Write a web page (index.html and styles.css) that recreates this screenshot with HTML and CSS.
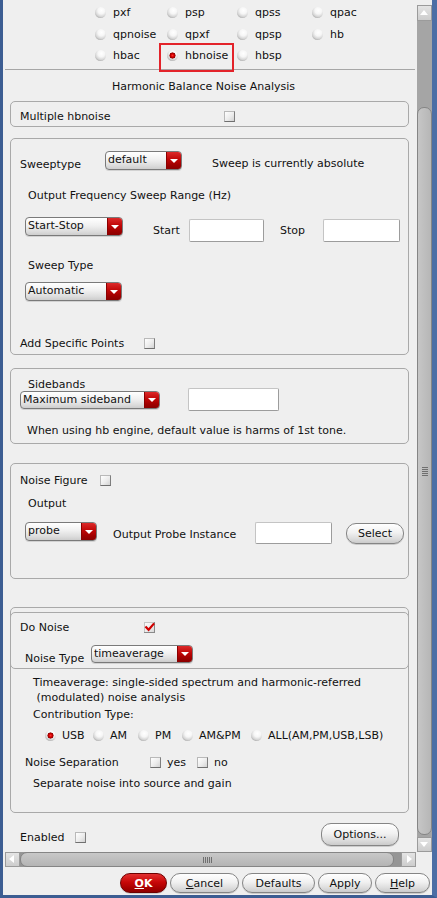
FILE: index.html
```html
<!DOCTYPE html>
<html>
<head>
<meta charset="utf-8">
<title>Harmonic Balance Noise Analysis</title>
<link rel="stylesheet" href="styles.css">
</head>
<body>
<div class="window">
  <div class="main">
    <div class="content">
      <div class="radio-grid">
        <span class="opt"><span class="radio"></span>pxf</span>
        <span class="opt"><span class="radio"></span>psp</span>
        <span class="opt"><span class="radio"></span>qpss</span>
        <span class="opt"><span class="radio"></span>qpac</span>
        <span class="opt"><span class="radio"></span>qpnoise</span>
        <span class="opt"><span class="radio"></span>qpxf</span>
        <span class="opt"><span class="radio"></span>qpsp</span>
        <span class="opt"><span class="radio"></span>hb</span>
        <span class="opt"><span class="radio"></span>hbac</span>
        <span class="opt highlighted"><span class="radio on"></span>hbnoise</span>
        <span class="opt"><span class="radio"></span>hbsp</span>
      </div>
      <div class="sep"></div>
      <div class="title">Harmonic Balance Noise Analysis</div>

      <div class="group g1">
        <span class="lbl w204">Multiple hbnoise</span><span class="check"></span>
      </div>

      <div class="group g2">
        <div class="row g2-r1">
          <span class="lbl w85 mt7">Sweeptype</span>
          <span class="combo w77"><span class="combo-text">default</span><span class="combo-arrow"></span></span>
          <span class="lbl ml30 mt6">Sweep is currently absolute</span>
        </div>
        <div class="row g2-r2"><span class="lbl">Output Frequency Sweep Range (Hz)</span></div>
        <div class="row g2-r3">
          <span class="combo w98"><span class="combo-text">Start-Stop</span><span class="combo-arrow"></span></span>
          <span class="lbl ml30 w36 mt7">Start</span>
          <span class="field w75 mt2"></span>
          <span class="lbl ml16 w43 mt7">Stop</span>
          <span class="field w77 mt2"></span>
        </div>
        <div class="row g2-r4"><span class="lbl">Sweep Type</span></div>
        <div class="row g2-r5">
          <span class="combo w97"><span class="combo-text">Automatic</span><span class="combo-arrow"></span></span>
        </div>
        <div class="row g2-r6 center">
          <span class="lbl w124">Add Specific Points</span><span class="check"></span>
        </div>
      </div>

      <div class="group g3">
        <div class="row g3-r1"><span class="lbl">Sidebands</span></div>
        <div class="row g3-r2">
          <span class="combo w140 h18 mt3"><span class="combo-text">Maximum sideband</span><span class="combo-arrow"></span></span>
          <span class="field w91 ml28"></span>
        </div>
        <div class="row g3-r3"><span class="lbl">When using hb engine, default value is harms of 1st tone.</span></div>
      </div>

      <div class="group g4">
        <div class="row g4-r1 center">
          <span class="lbl w80">Noise Figure</span><span class="check"></span>
        </div>
        <div class="row g4-r2"><span class="lbl">Output</span></div>
        <div class="row g4-r3">
          <span class="combo w72"><span class="combo-text">probe</span><span class="combo-arrow"></span></span>
          <span class="lbl ml16 w142 mt6">Output Probe Instance</span>
          <span class="field w77 h22"></span>
          <span class="btn select">Select</span>
        </div>
      </div>

      <div class="group g5">
        <div class="g5-top">
          <div class="row g5-r1 center">
            <span class="lbl w124">Do Noise</span>
            <span class="check checked"><svg width="11" height="11" viewBox="0 0 11 11"><path d="M2.2 5.2 L4.6 7.8 L9.4 2.2" fill="none" stroke="#d00000" stroke-width="2.2" stroke-linecap="square"/></svg></span>
          </div>
          <div class="row g5-r2">
            <span class="lbl w66 mt7">Noise Type</span>
            <span class="combo w102 h18"><span class="combo-text">timeaverage</span><span class="combo-arrow"></span></span>
          </div>
        </div>
        <div class="txt t1">Timeaverage: single-sided spectrum and harmonic-referred</div>
        <div class="txt t2">&nbsp;(modulated) noise analysis</div>
        <div class="txt t3">Contribution Type:</div>
        <div class="contrib">
          <span class="opt"><span class="radio on"></span>USB</span>
          <span class="opt"><span class="radio"></span>AM</span>
          <span class="opt"><span class="radio"></span>PM</span>
          <span class="opt"><span class="radio"></span>AM&amp;PM</span>
          <span class="opt"><span class="radio"></span>ALL(AM,PM,USB,LSB)</span>
        </div>
        <div class="row noise-sep center">
          <span class="lbl w125">Noise Separation</span>
          <span class="cbopt w47"><span class="check"></span>yes</span>
          <span class="cbopt"><span class="check"></span>no</span>
        </div>
        <div class="txt t4">Separate noise into source and gain</div>
      </div>

      <div class="enabled-row">
        <span class="lbl w55 mt8">Enabled</span>
        <span class="check mt9"></span>
        <span class="btn options">Options...</span>
      </div>
    </div>

    <div class="vscroll">
      <div class="sb-btn up"></div>
      <div class="sb-track-v"><div class="sb-thumb-v"><span class="grip-v"></span></div></div>
      <div class="sb-btn down"></div>
    </div>
  </div>

  <div class="hscroll">
    <div class="sb-btn left"></div>
    <div class="sb-track-h"><div class="sb-thumb-h"><span class="grip-h"></span></div></div>
    <div class="sb-btn right"></div>
  </div>

  <div class="buttons">
    <span class="btn ok"><u>O</u>K</span>
    <span class="btn cancel"><u>C</u>ancel</span>
    <span class="btn defaults">Defaults</span>
    <span class="btn apply">Apply</span>
    <span class="btn help"><u>H</u>elp</span>
  </div>
</div>
</body>
</html>
```

FILE: styles.css
```css
* { box-sizing: border-box; }
html, body { margin: 0; padding: 0; }
body {
  font-family: "DejaVu Sans", "Noto Sans", sans-serif;
  font-size: 11px;
  line-height: 13px;
  color: #111;
  background: #efefef;
}
.window {
  width: 437px;
  height: 898px;
  background: #efefef;
  border-left: 3px solid #3c5d92;
  border-right: 5px solid #4c6ea5;
  border-bottom: 3px solid #3c5d92;
  display: flex;
  flex-direction: column;
  overflow: hidden;
}
.main { display: flex; height: 852px; flex: none; }
.content { width: 414px; flex: none; display: flex; flex-direction: column; }

/* radio options at top */
.radio-grid {
  display: grid;
  grid-template-columns: 72px 70px 75px 60px;
  grid-auto-rows: 21.5px;
  padding: 2px 0 0 92px;
}
.opt { display: flex; align-items: center; gap: 7px; white-space: nowrap; position: relative; }
.radio {
  width: 11px; height: 11px; flex: none;
  border-radius: 50%;
  background: radial-gradient(circle at 58% 32%, #ffffff 0%, #f6f6f6 35%, #d6d6d6 62%, #a2a2a2 85%, #7d7d7d 100%);
}
.radio.on {
  background:
    radial-gradient(circle at 50% 50%, #ff3030 0, #d40000 1.6px, #8e0000 2.8px, rgba(0,0,0,0) 3.3px),
    radial-gradient(circle at 58% 32%, #ffffff 0%, #f6f6f6 35%, #d6d6d6 62%, #a2a2a2 85%, #7d7d7d 100%);
}
.highlighted::after {
  content: "";
  position: absolute;
  left: -8px; top: -2px;
  width: 71px; height: 25px;
  border: 2px solid #e3232a;
}
.sep { margin: 2.5px 2px 0; height: 1px; background: #a6a6a6; }
.title { margin-top: 10px; text-align: center; padding-right: 13px; }

/* group boxes */
.group {
  margin: 0 8px 0 7px;
  border: 1px solid #a9a9a9;
  border-radius: 5px;
  padding-left: 9px;
  flex: none;
}
.row { display: flex; align-items: flex-start; white-space: nowrap; }
.row.center { align-items: center; }
.lbl { flex: none; white-space: nowrap; }

.g1 { margin-top: 8px; height: 26px; display: flex; align-items: center; padding-top: 4px; }
.g2 { margin-top: 11px; height: 217px; padding-top: 12px; }
.g2-r2 { margin-top: 18px; padding-left: 8px; }
.g2-r3 { margin-top: 15px; padding-left: 5px; }
.g2-r4 { margin-top: 17px; padding-left: 8px; }
.g2-r5 { margin-top: 10px; padding-left: 5px; }
.g2-r6 { margin-top: 36px; }

.g3 { margin-top: 13px; height: 76px; padding-top: 9px; }
.g3-r1 { padding-left: 8px; }
.g3-r2 { margin-top: -3px; }
.g3-r3 { margin-top: 13px; padding-left: 7px; }

.g4 { margin-top: 19px; height: 116px; padding-top: 10px; }
.g4-r2 { margin-top: 10px; padding-left: 8px; }
.g4-r3 { margin-top: 12px; padding-left: 5px; }

.g5 { margin-top: 28px; height: 206px; }
.g5-top {
  margin: 4px -1px 0 -10px;
  height: 57px;
  border: 1px solid #a9a9a9;
  border-radius: 5px;
  padding: 8px 0 0 9px;
}
.g5-r2 { margin-top: 11px; padding-left: 5px; }
.txt { white-space: nowrap; padding-left: 13px; }
.t1 { margin-top: 7px; }
.t2 { margin-top: 2px; }
.t3 { margin-top: 4px; }
.contrib {
  margin-top: 9px;
  padding-left: 25px;
  display: grid;
  grid-template-columns: 48px 45px 44px 69px auto;
  height: 11px;
}
.contrib .opt { gap: 6px; height: 11px; }
.noise-sep { margin-top: 15px; padding-left: 5px; height: 13px; }
.cbopt { display: flex; align-items: center; gap: 6px; flex: none; }
.t4 { margin-top: 8px; }

.enabled-row { margin-top: 10px; height: 23px; display: flex; align-items: flex-start; padding: 0 18px 0 17px; flex: none; }
.options { margin-left: auto; width: 78px; height: 23px; border-radius: 11px; }

/* widths & offsets */
.w36 { width: 36px; } .w43 { width: 43px; } .w47 { width: 47px; } .w55 { width: 55px; }
.w66 { width: 66px; } .w72 { width: 72px; } .w75 { width: 75px; } .w77 { width: 77px; }
.w80 { width: 80px; } .w85 { width: 85px; } .w91 { width: 91px; } .w97 { width: 97px; }
.w98 { width: 98px; } .w102 { width: 102px; } .w124 { width: 124px; } .w125 { width: 125px; }
.w140 { width: 140px; } .w142 { width: 142px; } .w204 { width: 204px; }
.ml16 { margin-left: 16px; } .ml28 { margin-left: 28px; } .ml30 { margin-left: 30px; }
.mt2 { margin-top: 2px; } .mt3 { margin-top: 3px; } .mt6 { margin-top: 6px; } .mt7 { margin-top: 7px; }
.mt8 { margin-top: 8px; } .mt9 { margin-top: 9px; }

/* check boxes */
.check {
  width: 11px; height: 11px; flex: none; display: block;
  border: 1px solid;
  border-color: #b9b9b9 #7e7e7e #6f6f6f #b9b9b9;
  background: linear-gradient(135deg, #ffffff 0%, #ececec 55%, #d2d2d2 100%);
}
.check.checked { border: none; background: linear-gradient(135deg, #ffffff 0%, #ececec 55%, #d2d2d2 100%); box-shadow: inset -1px -1px 0 #8a8a8a, inset 1px 1px 0 #c4c4c4; }
.check svg { display: block; }

/* combo boxes */
.combo {
  display: flex; flex: none;
  height: 19px;
  border: 1px solid #7a7a7a;
  border-radius: 4px;
  overflow: hidden;
  background: linear-gradient(#ffffff 0%, #f0f0f0 45%, #dcdcdc 80%, #cdcdcd 100%);
  box-shadow: 0 1px 0 rgba(0,0,0,0.12);
}
.combo.h18 { height: 18px; }
.combo-text { flex: 1; padding-left: 2px; line-height: 16px; white-space: nowrap; overflow: hidden; }
.combo-arrow {
  width: 15px; flex: none; position: relative;
  background: linear-gradient(#dc2a2a 0%, #bf0606 45%, #a00000 75%, #8a0000 100%);
  border-left: 1px solid #8a0000;
}
.combo-arrow::after {
  content: "";
  position: absolute;
  left: 3px; top: 50%;
  margin-top: -2px;
  border-left: 4px solid transparent;
  border-right: 4px solid transparent;
  border-top: 4px solid #ffffff;
}

/* fields */
.field {
  display: block; flex: none;
  height: 23px;
  background: #ffffff;
  border: 1px solid #c4c4c4;
  border-right-color: #9c9c9c;
  border-bottom-color: #9c9c9c;
  border-radius: 2px;
}
.field.h22 { height: 22px; }

/* buttons */
.btn {
  display: flex; align-items: center; justify-content: center; flex: none;
  border: 1px solid #858585;
  border-radius: 10px;
  background: linear-gradient(#ffffff 0%, #f1f1f1 45%, #dedede 75%, #cbcbcb 100%);
  box-shadow: 0 1px 0 rgba(0,0,0,0.15);
  white-space: nowrap;
}
.select { margin-left: 14px; margin-top: 1px; width: 58px; height: 21px; }
.buttons { display: flex; gap: 3px; margin-top: 6px; padding-left: 117px; height: 20px; flex: none; }
.buttons .btn { height: 20px; }
.btn u { text-decoration: underline; text-underline-offset: 1px; }
.ok {
  width: 47px;
  background: linear-gradient(#e23030 0%, #c80808 45%, #a60000 80%, #8f0000 100%);
  border-color: #6e0000;
  color: #ffffff;
  font-weight: bold;
}
.cancel { width: 69px; }
.defaults { width: 73px; }
.apply { width: 54px; }
.help { width: 55px; }

/* scroll bars */
.vscroll { width: 15px; margin-top: 5px; display: flex; flex-direction: column; flex: none; }
.sb-btn {
  flex: none; position: relative;
  background: linear-gradient(#e4e4e4, #cdcdcd);
  border: 1px solid #9b9b9b;
}
.sb-btn.up { height: 16px; }
.sb-btn.down { height: 15px; }
.sb-btn.left, .sb-btn.right { width: 15px; }
.sb-btn::after { content: ""; position: absolute; }
.sb-btn.up::after {
  left: 2px; top: 4px;
  border-left: 4.5px solid transparent; border-right: 4.5px solid transparent;
  border-bottom: 5px solid #ffffff;
}
.sb-btn.down::after {
  left: 2px; top: 4px;
  border-left: 4.5px solid transparent; border-right: 4.5px solid transparent;
  border-top: 5px solid #ffffff;
}
.sb-btn.left::after {
  left: 3px; top: 2px;
  border-top: 4.5px solid transparent; border-bottom: 4.5px solid transparent;
  border-right: 5px solid #ffffff;
}
.sb-btn.right::after {
  left: 5px; top: 2px;
  border-top: 4.5px solid transparent; border-bottom: 4.5px solid transparent;
  border-left: 5px solid #ffffff;
}
.sb-track-v { flex: 1; background: #a5a5a5; padding-top: 86px; }
.sb-thumb-v {
  height: 728px;
  border: 1px solid #858585;
  border-radius: 7px;
  background: linear-gradient(90deg, #c6c6c6, #b6b6b6);
  display: flex; align-items: center; justify-content: center;
}
.grip-v {
  width: 6px; height: 9px;
  background: repeating-linear-gradient(#6f6f6f 0 1px, transparent 1px 2px);
}
.hscroll { display: flex; height: 15px; margin-left: 2px; width: 411px; flex: none; }
.sb-track-h { flex: 1; background: #959595; }
.sb-thumb-h {
  width: 374px; height: 100%;
  border: 1px solid #858585;
  border-radius: 7px;
  background: linear-gradient(#c8c8c8, #b4b4b4);
  display: flex; align-items: center; justify-content: center;
}
.grip-h {
  width: 9px; height: 6px;
  background: repeating-linear-gradient(90deg, #6f6f6f 0 1px, transparent 1px 2px);
}
```
